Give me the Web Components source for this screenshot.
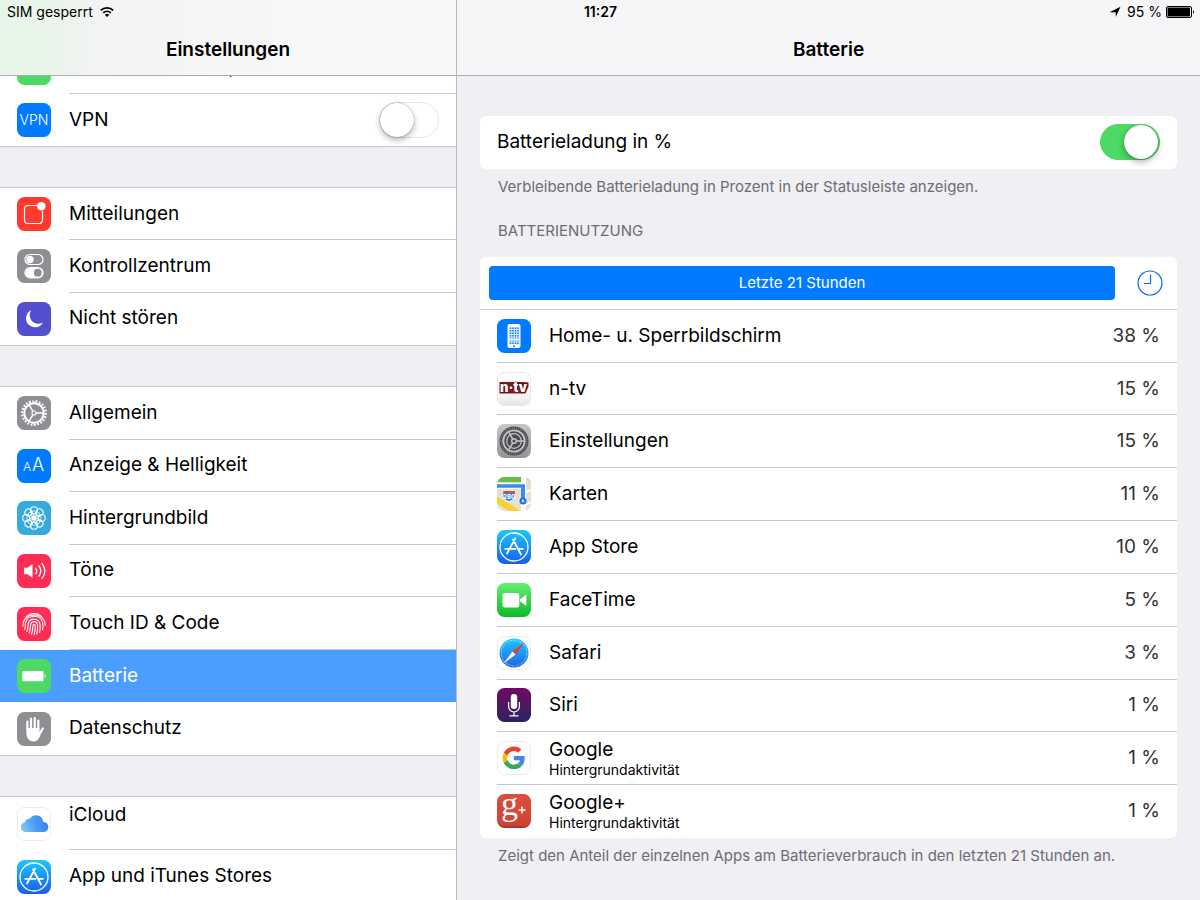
<!DOCTYPE html>
<html lang="de">
<head>
<meta charset="utf-8">
<meta name="viewport" content="width=device-width, initial-scale=1">
<title>Einstellungen</title>
<style>
  body {
    margin: 0;
    font-family: Inter, "Liberation Sans", sans-serif;
    font-size: 19px;
    line-height: 24px;
    color: #000;
    background: #efeff4;
  }
</style>
</head>
<body>

<settings-app>
  <status-bar slot="status"></status-bar>

  <settings-pane slot="sidebar" heading="Einstellungen" tinted>
    <settings-group cut>
      <settings-row icon="hotspot" label="Persönlicher Hotspot" link></settings-row>
    </settings-group>
    <settings-group>
      <settings-row icon="vpn" label="VPN" toggle="off" last></settings-row>
    </settings-group>
    <settings-group spaced style="--group-height: 157px">
      <settings-row icon="notifications" label="Mitteilungen" link></settings-row>
      <settings-row icon="control" label="Kontrollzentrum" link></settings-row>
      <settings-row icon="moon" label="Nicht stören" link last></settings-row>
    </settings-group>
    <settings-group spaced style="--group-height: 368px">
      <settings-row icon="general" label="Allgemein" link></settings-row>
      <settings-row icon="display" label="Anzeige &amp; Helligkeit" link></settings-row>
      <settings-row icon="wallpaper" label="Hintergrundbild" link></settings-row>
      <settings-row icon="sounds" label="Töne" link></settings-row>
      <settings-row icon="touchid" label="Touch ID &amp; Code" link></settings-row>
      <settings-row icon="battery" label="Batterie" link selected></settings-row>
      <settings-row icon="privacy" label="Datenschutz" link last></settings-row>
    </settings-group>
    <settings-group spaced style="--group-height: 106px">
      <settings-row icon="icloud" label="iCloud" sub="&nbsp;" link></settings-row>
      <settings-row icon="appstore" label="App und iTunes Stores" link last></settings-row>
    </settings-group>
  </settings-pane>

  <settings-pane slot="detail" heading="Batterie" inset>
    <settings-card>
      <settings-row label="Batterieladung in %" toggle="on" last></settings-row>
      <span slot="footer">Verbleibende Batterieladung in Prozent in der Statusleiste anzeigen.</span>
    </settings-card>
    <settings-card style="--group-height: 581px">
      <span slot="header">BATTERIENUTZUNG</span>
      <usage-range label="Letzte 21 Stunden"></usage-range>
      <settings-row wide icon="home" label="Home- u. Sperrbildschirm" value="38 %"></settings-row>
      <settings-row wide icon="ntv" label="n-tv" value="15 %"></settings-row>
      <settings-row wide icon="settings" label="Einstellungen" value="15 %"></settings-row>
      <settings-row wide icon="maps" label="Karten" value="11 %"></settings-row>
      <settings-row wide icon="appstore" label="App Store" value="10 %"></settings-row>
      <settings-row wide icon="facetime" label="FaceTime" value="5 %"></settings-row>
      <settings-row wide icon="safari" label="Safari" value="3 %"></settings-row>
      <settings-row wide icon="siri" label="Siri" value="1 %"></settings-row>
      <settings-row wide icon="google" label="Google" sub="Hintergrundaktivität" value="1 %"></settings-row>
      <settings-row wide icon="gplus" label="Google+" sub="Hintergrundaktivität" value="1 %" last></settings-row>
      <span slot="footer">Zeigt den Anteil der einzelnen Apps am Batterieverbrauch in den letzten 21 Stunden an.</span>
    </settings-card>
  </settings-pane>
</settings-app>

<script>
// Every icon is drawn on a 34x34 tile
const tile = (fill) => `<rect width="34" height="34" rx="7.500" fill="${fill}"/>`;
const whiteTile = '<rect x=".5" y=".5" width="33" height="33" rx="7" fill="#fff" stroke="#ececee"/>';

const ICONS = {
  hotspot: tile('#4cd964'),

  vpn: `${tile('#007aff')}
    <text x="17" y="22" text-anchor="middle" font-size="14" font-weight="300" fill="#fff">VPN</text>`,

  notifications: `${tile('#ff3b30')}
    <path d="M20 8.5h-9A3.5 3.5 0 0 0 7.500 12v11a3.500 3.500 0 0 0 3.500 3.500h11a3.500 3.500 0 0 0 3.500-3.500v-9" fill="none" stroke="#fff" stroke-width="1.200"/>
    <circle cx="24.300" cy="9.300" r="4.300" fill="#fff"/>`,

  control: `${tile('#8e8e93')}
    <rect x="8" y="5.500" width="18" height="10" rx="5" fill="none" stroke="#fff" stroke-width="1.200"/>
    <circle cx="13" cy="10.500" r="3.700" fill="#fff"/>
    <rect x="7.400" y="18" width="19.200" height="11.400" rx="5.700" fill="#fff"/>
    <circle cx="20.800" cy="23.700" r="3.900" fill="#8e8e93"/>`,

  moon: `${tile('#5250cf')}
    <path d="M14.200 8.200a9 9 0 1 0 11.800 12.300a8.700 8.700 0 0 1-11.800-12.300z" fill="#fff"/>`,

  general: `${tile('#8e8e93')}
    <g fill="none" stroke="#fff">
      <circle cx="17" cy="17" r="11.800" stroke-width="2.400" pathLength="44" stroke-dasharray="1 1"/>
      <circle cx="17" cy="17" r="9.700" stroke-width="2"/>
      <circle cx="17" cy="17" r="2" stroke-width="1.200"/>
      <path d="M19 17h8M16 15.300l-4.200-7M16 18.700l-4.200 7" stroke-width="1.500"/>
    </g>`,

  display: `${tile('#007aff')}
    <text x="6" y="22" font-size="12" font-weight="300" fill="#fff">A</text>
    <text x="15" y="22" font-size="18" font-weight="300" fill="#fff">A</text>`,

  wallpaper: `${tile('#36aadc')}
    <g fill="none" stroke="#fff" stroke-width="1.100">
      ${[0, 45, 90, 135, 180, 225, 270, 315].map(a =>
        `<circle cx="17" cy="9.200" r="3.500" transform="rotate(${a} 17 17)"/>
         <ellipse cx="17" cy="13" rx="2.200" ry="3.400" stroke-width=".7" transform="rotate(${a} 17 17)"/>`).join('')}
      <circle cx="17" cy="17" r="1.800" fill="#fff"/>
    </g>`,

  sounds: `${tile('#ff2d55')}
    <path d="M7 13.700h3.500l5-3.800v14.200l-5-3.800H7z" fill="#fff"/>
    <path d="M18.500 13.800q2.400 3.200 0 6.400M21.600 11.500q4.400 5.500 0 11M24.700 9.200q6.400 7.800 0 15.600" fill="none" stroke="#fff" stroke-width="1.300"/>`,

  touchid: `${tile('#ff2d55')}
    <g fill="none" stroke="#fff" stroke-width="1.100" stroke-linecap="round">
      <path d="M9 9.800a11.500 11.500 0 0 1 16 0"/>
      <path d="M6 19c-.5-14.500 22-15 22.200-.5"/>
      <path d="M7.700 22.500c1-2 .2-4 .8-6.300 2-9.300 16-9.300 17.300.6.300 2.500 0 4.500-.3 6.200"/>
      <path d="M9.800 24.500c1.600-2.600.8-5.500 1.500-8 1.800-6.200 10.500-5.500 11.700.6.500 3 .2 5.600-.4 8.400"/>
      <path d="M12 26c1.500-3 1.200-5.500 1.500-8 .6-4.500 6.400-4.500 7 0 .4 3 .1 6-.8 9"/>
      <path d="M14.500 27.300c1.300-3 1.300-6 1.400-8.600.2-1.800 2.200-1.800 2.300 0 .1 3.300-.2 6-1 9"/>
    </g>`,

  battery: `${tile('#4cd964')}
    <rect x="5.300" y="12" width="21.200" height="10.200" rx="1" fill="#fff"/>
    <path d="M27.600 15q2.200 2.100 0 4.200z" fill="#fff"/>`,

  privacy: `${tile('#8e8e93')}
    <g stroke="#fff" stroke-linecap="round" fill="none" stroke-width="2.200">
      <path d="M10.400 17V9.500M14 16V6.600M17.700 16V6.100M21.300 17V8.600"/>
      <path d="M21.500 23.500l4.300-7"/>
    </g>
    <path d="M9.300 16h13.100l.3 5 2-1.500C22.800 24.500 22 29.400 16.500 29.400S9.300 24.500 9.300 20z" fill="#fff"/>`,

  icloud: `${whiteTile}
    <linearGradient id="c" x1="0" y1=".6" x2="1" y2=".4"><stop stop-color="#7cc8f8"/><stop offset=".5" stop-color="#4a9df0"/><stop offset="1" stop-color="#3b82ee"/></linearGradient>
    <path d="M8.200 25a5 5 0 0 1-.5-9.800 4.200 4.200 0 0 1 5-3.400 7.300 7.300 0 0 1 13.500 3.200A5 5 0 0 1 26.500 25z" fill="url(#c)"/>`,

  appstore: `<linearGradient id="a" x2="0" y2="1"><stop stop-color="#1cc8fb"/><stop offset="1" stop-color="#1a5cf0"/></linearGradient>
    ${tile('url(#a)')}
    <g fill="none" stroke="#fff" stroke-width="1.800">
      <circle cx="17" cy="17" r="14" stroke-width="1.300"/>
      <path d="M18.200 8.500L10 23.500M16 9.500l8 15M8.300 18.900h10M21.300 18.900h4.500" stroke-linecap="round"/>
    </g>`,

  home: `${tile('#007aff')}
    <rect x="10.500" y="5" width="13" height="24" rx="2" fill="#fff"/>
    <rect x="11.600" y="8" width="10.800" height="17.500" fill="#e0efff"/>
    <path d="M13.500 8.500v17M16 8.500v17M18.500 8.500v17M21 8.500v17" stroke="#007aff" stroke-width="1.500" stroke-dasharray="1.500 1"/>
    <path d="M11.600 20.500h10.800" stroke="#fff" stroke-width="1.800"/>
    <circle cx="17" cy="27.200" r="1" fill="#007aff"/>`,

  ntv: `<linearGradient id="n" x2="0" y2="1"><stop stop-color="#fff"/><stop offset=".7" stop-color="#f6f4f4"/><stop offset="1" stop-color="#e6e3e3"/></linearGradient>
    <rect x=".5" y=".5" width="33" height="33" rx="7" fill="url(#n)" stroke="#e9e7e7"/>
    <path d="M2.500 10h24l5 .5v4l-3 7h-26z" fill="#8c1420"/>
    <text x="16.500" y="20" text-anchor="middle" font-size="13" font-weight="900" fill="#fff" stroke="#4d0a12" stroke-width="1.200" paint-order="stroke">n·tv</text>`,

  settings: `<linearGradient id="s" x2="0" y2="1"><stop stop-color="#c6c6c8"/><stop offset="1" stop-color="#929297"/></linearGradient>
    ${tile('url(#s)')}
    <circle cx="17" cy="17" r="14.500" fill="#4b4c50"/>
    <g fill="none" stroke="#c4c4c6">
      <circle cx="17" cy="17" r="13" stroke="#a4a4a7" stroke-width="1" pathLength="80" stroke-dasharray="1 1"/>
      <circle cx="17" cy="17" r="10.700" stroke-width="1.800"/>
      <circle cx="17" cy="17" r="7.300" stroke-width="1.200"/>
      <circle cx="17" cy="17" r="2.300" stroke-width="1.500"/>
      <path d="M19 17h8M16 15.300l-4.200-7M16 18.700l-4.200 7" stroke-width="1.600"/>
    </g>`,

  maps: `<clipPath id="m"><rect width="34" height="34" rx="7.500"/></clipPath>
    <g clip-path="url(#m)">
      <rect width="34" height="34" fill="#e6e0d2"/>
      <path d="M0 0h24v5.500H0z" fill="#6abf40"/>
      <path d="M29 0h5v7z" fill="#f2b7bb"/>
      <path d="M0 5.500h24V0h5v34h-5V12H0z" fill="#fff"/>
      <path d="M0 7.300h28v17h-4V10.700H0z" fill="#3a8cf0"/>
      <path d="M0 19.500L23 33v1H12L0 26.500z" fill="#fbd035"/>
      <path d="M29 15l5-2M29 28l5-3" stroke="#fff" stroke-width="2"/>
      <circle cx="26" cy="24" r="3.500" fill="#2272e0"/>
      <path d="M26 21.800l1.700 3.600-1.700-.8-1.700.8z" fill="#fff"/>
      <path d="M6.500 14h11.200c2 6-.5 9-5.600 10.500C7 23 4.500 20 6.500 14z" fill="#2f7fe6" stroke="#fff" stroke-width=".8"/>
      <path d="M6.500 14h11.200l.5 2.300H6z" fill="#e2453c"/>
      <text x="12.100" y="21.500" text-anchor="middle" font-size="6" font-weight="800" fill="#fff">280</text>
    </g>`,

  facetime: `<linearGradient id="f" x2="0" y2="1"><stop stop-color="#67ee72"/><stop offset="1" stop-color="#0bbb29"/></linearGradient>
    ${tile('url(#f)')}
    <rect x="5.500" y="10" width="16.800" height="14.500" rx="2.500" fill="#fff"/>
    <path d="M23 16.200l6.300-4.700v11.500L23 18.300z" fill="#fff"/>`,

  safari: `<linearGradient id="w" x2="0" y2="1"><stop stop-color="#1fcbfb"/><stop offset="1" stop-color="#1d62e8"/></linearGradient>
    ${whiteTile}
    <circle cx="17" cy="17" r="14.500" fill="url(#w)"/>
    <circle cx="17" cy="17" r="12.800" fill="none" stroke="#fff" stroke-width="1.200" opacity=".7" pathLength="120" stroke-dasharray=".8 1.200"/>
    <path d="M27.500 6.500L18.500 18.500 15.500 15.500z" fill="#f3342f"/>
    <path d="M6.500 27.500L15.500 15.500 18.500 18.500z" fill="#fff"/>`,

  siri: `<linearGradient id="i" x2="0" y2="1"><stop stop-color="#6f0a62"/><stop offset="1" stop-color="#2b2460"/></linearGradient>
    ${tile('url(#i)')}
    <rect x="13.800" y="6" width="6.400" height="15" rx="3.200" fill="#fff"/>
    <path d="M11.600 14v4.600a5.400 5.400 0 0 0 10.800 0V14M17 24v3.600M12.500 27.900h9" fill="none" stroke="#fff" stroke-width="1.200"/>`,

  google: `${whiteTile}
    <g transform="translate(5.600 5.600) scale(.47)">
      <path fill="#ea4335" d="M24 9.500c3.540 0 6.710 1.220 9.210 3.600l6.850-6.850C35.900 2.380 30.470 0 24 0 14.620 0 6.510 5.380 2.560 13.220l7.980 6.190C12.430 13.720 17.740 9.500 24 9.500z"/>
      <path fill="#4285f4" d="M46.980 24.550c0-1.570-.15-3.090-.38-4.550H24v9.020h12.940c-.58 2.960-2.260 5.480-4.780 7.180l7.730 6c4.510-4.180 7.090-10.360 7.090-17.650z"/>
      <path fill="#fbbc05" d="M10.530 28.590c-.48-1.450-.76-2.990-.76-4.590s.27-3.140.76-4.590l-7.980-6.190C.92 16.460 0 20.120 0 24c0 3.880.92 7.540 2.560 10.780l7.970-6.190z"/>
      <path fill="#34a853" d="M24 48c6.480 0 11.930-2.130 15.890-5.810l-7.730-6c-2.150 1.450-4.920 2.300-8.160 2.300-6.260 0-11.570-4.220-13.470-9.910l-7.980 6.190C6.510 42.620 14.620 48 24 48z"/>
    </g>`,

  gplus: `<linearGradient id="g" x2="0" y2="1"><stop stop-color="#d9503f"/><stop offset=".9" stop-color="#cf4332"/><stop offset="1" stop-color="#a5301f"/></linearGradient>
    ${tile('url(#g)')}
    <text x="4" y="21" font-family="Liberation Serif, serif" font-size="34" fill="#fff">g</text>
    <path d="M25 12.500v7M21.500 16h7" stroke="#fff" stroke-width="1.500"/>`
};

class AppIcon extends HTMLElement {
  constructor() {
    super();
    this.attachShadow({ mode: 'open' });
  }

  connectedCallback() {
    this.shadowRoot.innerHTML = `
      <style>
        :host { display: block; flex: none; width: 34px; height: 34px; }
        svg { display: block; width: 100%; height: 100%; overflow: visible; }
      </style>
      <svg viewBox="0 0 34 34" aria-hidden="true">${ICONS[this.getAttribute('name')] || ''}</svg>
    `;
  }
}

class SettingsRow extends HTMLElement {
  constructor() {
    super();
    this.attachShadow({ mode: 'open' });
  }

  connectedCallback() {
    this.render();
  }

  getStyles() {
    return `
      :host { display: grid; background: #fff; }
      .row {
        display: flex;
        align-items: stretch;
        gap: 18px;
        padding-left: 17px;
        color: inherit;
        text-decoration: none;
        min-width: 0;
      }
      app-icon { align-self: center; }
      .body {
        flex: 1;
        display: flex;
        align-items: center;
        gap: 12px;
        padding-right: 17px;
        border-bottom: 1px solid #c8c7cc;
        min-width: 0;
      }
      :host([last]) .body { border-color: transparent; }
      :host([wide]) { background: none; }
      :host([wide]) .row { margin-left: 17px; padding-left: 0; border-bottom: 1px solid #c8c7cc; }
      :host([wide]) .body { border-bottom: 0; }
      :host([wide][last]) .row { border-color: transparent; }
      :host([selected]) { background: #4b9efe; color: #fff; }
      :host([selected]) .body { border-color: #4b9efe; }
      .text { flex: 1; min-width: 0; }
      .label, .sub { display: block; white-space: nowrap; }
      .sub { font-size: 14px; line-height: 16px; }
      .value { color: #333; }
      input {
        appearance: none;
        box-sizing: border-box;
        display: flex;
        width: 60px;
        height: 36px;
        margin: 0;
        padding: 1px;
        border-radius: 18px;
        background: #fff;
        border: 1px solid #e5e5e5;
      }
      input::before {
        content: "";
        width: 34px;
        height: 34px;
        margin: -1px;
        border-radius: 50%;
        background: #fff;
        box-shadow: 0 0 1px rgba(0, 0, 0, .5), 0 3px 6px rgba(0, 0, 0, .3);
      }
      input:checked {
        justify-content: flex-end;
        background: #4cd964;
        border-color: #4cd964;
      }
      input:checked::before { margin: -1px 0; }
    `;
  }

  render() {
    const label = this.getAttribute('label');
    const sub = this.getAttribute('sub');
    const icon = this.getAttribute('icon');
    const value = this.getAttribute('value');
    const toggle = this.getAttribute('toggle');
    const tag = this.hasAttribute('link') ? 'a' : 'div';
    const attrs = this.hasAttribute('link')
      ? `href="#${icon}"${this.hasAttribute('selected') ? ' aria-current="page"' : ''}`
      : '';

    this.shadowRoot.innerHTML = `
      <style>${this.getStyles()}</style>
      <${tag} class="row" ${attrs}>
        ${icon ? `<app-icon name="${icon}"></app-icon>` : ''}
        <div class="body">
          <div class="text">
            ${toggle ? `<label class="label" for="switch">${label}</label>` : `<span class="label">${label}</span>`}
            ${sub ? `<span class="sub">${sub}</span>` : ''}
          </div>
          ${value ? `<span class="value">${value}</span>` : ''}
          ${toggle ? `<input id="switch" type="checkbox" role="switch" ${toggle === 'on' ? 'checked' : ''}>` : ''}
        </div>
      </${tag}>
    `;
  }
}

class SettingsGroup extends HTMLElement {
  constructor() {
    super();
    this.attachShadow({ mode: 'open' });
    this.shadowRoot.innerHTML = `
      <style>
        :host {
          display: grid;
          grid-auto-rows: 1fr;
          flex: none;
          min-height: var(--group-height, 52px);
          border-bottom: 1px solid #c8c7cc;
        }
        :host([spaced]) { margin-top: 40px; border-top: 1px solid #c8c7cc; }
        /* row that has scrolled up under the title bar */
        :host([cut]) {
          grid-auto-rows: 53px;
          align-content: end;
          min-height: 0;
          height: 18px;
          overflow: hidden;
          border: 0;
        }
      </style>
      <slot></slot>
    `;
  }
}

class SettingsCard extends HTMLElement {
  constructor() {
    super();
    this.attachShadow({ mode: 'open' });
    this.shadowRoot.innerHTML = `
      <style>
        :host { display: block; color: #000; }
        .card {
          display: grid;
          grid-auto-rows: 1fr;
          min-height: var(--group-height, 53px);
          background: #fff;
          border-radius: 6px;
          overflow: hidden;
        }
        .note {
          padding: 0 18px;
          font-size: 15px;
          line-height: 20px;
          color: #6d6d72;
        }
        slot { display: contents; }
        slot[name=header] { display: block; padding: 0 0 16px; }
        slot[name=footer] { display: block; padding: 8px 0 24px; }
        .none { display: none; }
      </style>
      <div class="note head"><slot name="header"></slot></div>
      <div class="card"><slot></slot></div>
      <div class="note"><slot name="footer"></slot></div>
    `;
  }

  connectedCallback() {
    if (!this.querySelector('[slot=header]')) {
      this.shadowRoot.querySelector('.head').classList.add('none');
    }
  }
}

class UsageRange extends HTMLElement {
  constructor() {
    super();
    this.attachShadow({ mode: 'open' });
  }

  connectedCallback() {
    this.shadowRoot.innerHTML = `
      <style>
        :host {
          display: flex;
          align-items: center;
          gap: 22px;
          padding: 0 14px 0 9px;
          border-bottom: 1px solid #c8c7cc;
        }
        button { font: inherit; border: 0; padding: 0; margin: 0; background: none; }
        .range {
          flex: 1;
          height: 34px;
          border-radius: 4px;
          background: #007aff;
          color: #fff;
          font-size: 15px;
        }
        .clock { display: block; width: 26px; height: 26px; }
        svg { display: block; }
      </style>
      <button class="range" type="button">${this.getAttribute('label')}</button>
      <button class="clock" type="button" aria-label="Nutzungsdauer anzeigen">
        <svg width="26" height="26" viewBox="0 0 26 26" fill="none" stroke="#0a6fe0" stroke-width="1.200">
          <circle cx="13" cy="13" r="12"/>
          <path d="M13.500 4.500v9H7"/>
        </svg>
      </button>
    `;
  }
}

class SettingsPane extends HTMLElement {
  constructor() {
    super();
    this.attachShadow({ mode: 'open' });
  }

  connectedCallback() {
    this.shadowRoot.innerHTML = `
      <style>
        :host { display: flex; flex-direction: column; min-width: 0; min-height: 0; }
        header {
          flex: none;
          padding: 36px 0 12px;
          border-bottom: 1px solid #aeaeb2;
          background: #f6f6f8;
          text-align: center;
        }
        :host([tinted]) header {
          background: linear-gradient(90deg, #e6f7e8 0, #e9f5ea 50px, #f2f3f3 90px, #f7f7f7 60%, #f8f8f8);
        }
        h1 { margin: 0; font-size: 19px; line-height: 27px; font-weight: 600; }
        main { flex: 1; min-height: 0; overflow: hidden; display: flex; flex-direction: column; }
        :host([inset]) main { display: block; padding: 40px 23px 0; }
      </style>
      <header><h1>${this.getAttribute('heading')}</h1></header>
      <main><slot></slot></main>
    `;
  }
}

class StatusBar extends HTMLElement {
  constructor() {
    super();
    this.attachShadow({ mode: 'open' });
    this.shadowRoot.innerHTML = `
      <style>
        :host {
          display: grid;
          grid-template-columns: 1fr auto 1fr;
          align-items: center;
          padding: 0 6px 0 7px;
          height: 24px;
          font-size: 14px;
          line-height: 20px;
        }
        div { display: flex; align-items: center; gap: 7px; }
        .right { justify-content: flex-end; gap: 4px; }
        time { font-weight: 600; }
        svg { display: block; }
      </style>
      <div>
        <span>SIM gesperrt</span>
        <svg width="14" height="12" viewBox="0 0 14 12" fill="none" stroke="#000" stroke-width="1.800">
          <path d="M.8 4.300a9 9 0 0 1 12.400 0M3.200 6.900a5.600 5.600 0 0 1 7.600 0"/>
          <path d="M7 11L4.800 8.800a3.200 3.200 0 0 1 4.400 0z" fill="#000" stroke="none"/>
        </svg>
      </div>
      <time>11:27</time>
      <div class="right">
        <svg width="15" height="12" viewBox="0 0 15 12"><path d="M12.500 .8L7.700 11V6.200H1.500z"/></svg>
        <span>95 %</span>
        <svg width="28" height="12" viewBox="0 0 28 12">
          <rect x=".5" y=".5" width="25" height="11" rx="1.500" fill="none" stroke="#000"/>
          <rect x="1.500" y="1.500" width="22.500" height="9"/>
          <path d="M27 4q2 2 0 4z"/>
        </svg>
      </div>
    `;
  }
}

class SettingsApp extends HTMLElement {
  constructor() {
    super();
    this.attachShadow({ mode: 'open' });
    this.shadowRoot.innerHTML = `
      <style>
        :host {
          display: grid;
          grid-template-columns: 38% 1fr;
          grid-template-rows: auto minmax(0, 1fr);
          height: 100vh;
          overflow: hidden;
        }
        /* the status bar shares the first row with both title bars */
        ::slotted([slot=sidebar]) { grid-area: 1 / 1 / 3 / 2; }
        ::slotted([slot=detail]) { grid-area: 1 / 2 / 3 / 3; border-left: 1px solid #b9b9be; }
        ::slotted([slot=status]) { grid-area: 1 / 1 / 2 / 3; z-index: 1; }
      </style>
      <slot name="sidebar"></slot>
      <slot name="detail"></slot>
      <slot name="status"></slot>
    `;
  }
}

customElements.define('app-icon', AppIcon);
customElements.define('settings-row', SettingsRow);
customElements.define('settings-group', SettingsGroup);
customElements.define('settings-card', SettingsCard);
customElements.define('usage-range', UsageRange);
customElements.define('settings-pane', SettingsPane);
customElements.define('status-bar', StatusBar);
customElements.define('settings-app', SettingsApp);
</script>
</body>
</html>
